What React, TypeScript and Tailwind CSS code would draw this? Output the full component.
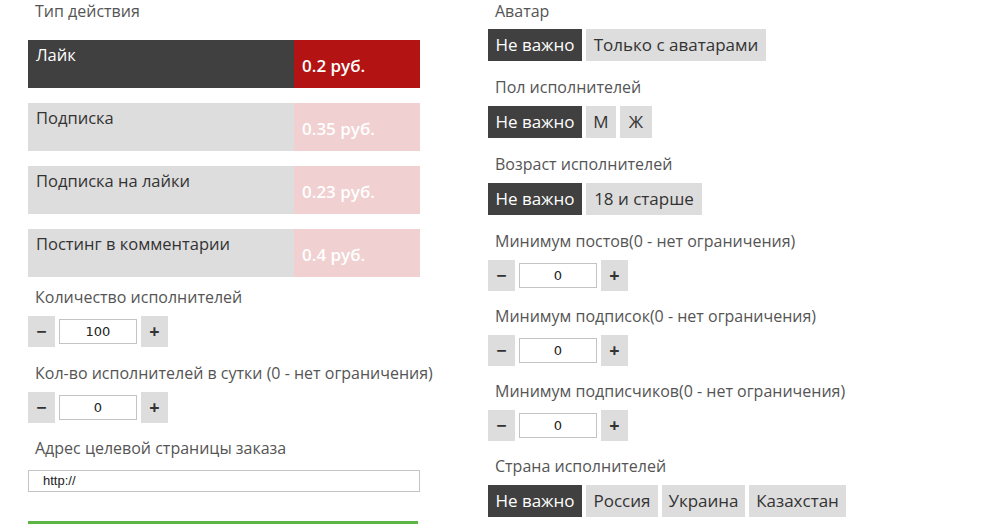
const font = { fontFamily: '"Open Sans", "Noto Sans", sans-serif' };

function Label({ text, className = '' }: { text: string; className?: string }) {
  return <div className={`h-[22px] pl-[7px] text-[16px] leading-[22px] whitespace-nowrap text-[#555] ${className}`}>{text}</div>;
}

function Stepper({ value, className = '' }: { value: string; className?: string }) {
  return (
    <div className={`flex items-center gap-[4px] ${className}`}>
      <div className="w-[27px] h-[31px] bg-[#dddddd] flex items-center justify-center text-[#333] text-[18px] font-bold">−</div>
      <div
        className="w-[78px] h-[25px] border border-[#c4c4c4] bg-white flex items-center justify-center text-[13px] text-[#222]"
        style={{ fontFamily: '"DejaVu Sans", sans-serif' }}
      >
        {value}
      </div>
      <div className="w-[27px] h-[31px] bg-[#dddddd] flex items-center justify-center text-[#333] text-[18px] font-bold">+</div>
    </div>
  );
}

function Choices({ items, className = '' }: { items: { t: string; w: string }[]; className?: string }) {
  return (
    <div className={`flex gap-[4px] ${className}`}>
      {items.map((it, i) => (
        <div
          key={i}
          className={`${it.w} h-[32px] flex items-center justify-center text-[17px] whitespace-nowrap ${
            i === 0 ? 'bg-[#404040] text-white' : 'bg-[#dddddd] text-[#333]'
          }`}
        >
          {it.t}
        </div>
      ))}
    </div>
  );
}

export default function App() {
  const actions = [
    { title: 'Лайк', price: '0.2 руб.', active: true },
    { title: 'Подписка', price: '0.35 руб.', active: false },
    { title: 'Подписка на лайки', price: '0.23 руб.', active: false },
    { title: 'Постинг в комментарии', price: '0.4 руб.', active: false },
  ];

  return (
    <div className="w-[985px] h-[524px] bg-white overflow-hidden flex pl-[28px] gap-[68px]" style={font}>
      <div className="w-[392px] flex flex-col shrink-0">
        <Label text="Тип действия" />
        <div className="mt-[18px] flex flex-col gap-[15px]">
          {actions.map((a, i) => (
            <div key={i} className="h-[48px] flex">
              <div
                className={`w-[266px] pl-[8px] pt-[4px] text-[16.5px] leading-[22px] ${
                  a.active ? 'bg-[#404040] text-white' : 'bg-[#dddddd] text-[#333]'
                }`}
              >
                {a.title}
              </div>
              <div
                className={`flex-1 pl-[8px] pt-[14px] text-[17px] leading-[24px] font-semibold text-white ${
                  a.active ? 'bg-[#b31312]' : 'bg-[#f0d0d0]'
                }`}
              >
                {a.price}
              </div>
            </div>
          ))}
        </div>
        <Label text="Количество исполнителей" className="mt-[9px]" />
        <Stepper value="100" className="mt-[8px]" />
        <Label text="Кол-во исполнителей в сутки (0 - нет ограничения)" className="mt-[15px]" />
        <Stepper value="0" className="mt-[8px]" />
        <Label text="Адрес целевой страницы заказа" className="mt-[14px]" />
        <div
          className="mt-[11px] h-[25px] border border-[#c4c4c4] bg-white flex items-center pl-[14px] text-[13px] text-[#222]"
          style={{ fontFamily: '"Liberation Sans", sans-serif' }}
        >
          http://
        </div>
        <div className="mt-[29px] h-[6px] w-[390px] bg-[#5cb646]" />
      </div>

      <div className="flex flex-col">
        <Label text="Аватар" />
        <Choices
          className="mt-[7px]"
          items={[
            { t: 'Не важно', w: 'w-[94px]' },
            { t: 'Только с аватарами', w: 'w-[180px]' },
          ]}
        />
        <Label text="Пол исполнителей" className="mt-[15px]" />
        <Choices
          className="mt-[8px]"
          items={[
            { t: 'Не важно', w: 'w-[94px]' },
            { t: 'М', w: 'w-[30px]' },
            { t: 'Ж', w: 'w-[32px]' },
          ]}
        />
        <Label text="Возраст исполнителей" className="mt-[15px]" />
        <Choices
          className="mt-[8px]"
          items={[
            { t: 'Не важно', w: 'w-[94px]' },
            { t: '18 и старше', w: 'w-[116px]' },
          ]}
        />
        <Label text="Минимум постов(0 - нет ограничения)" className="mt-[15px]" />
        <Stepper value="0" className="mt-[8px]" />
        <Label text="Минимум подписок(0 - нет ограничения)" className="mt-[14px]" />
        <Stepper value="0" className="mt-[8px]" />
        <Label text="Минимум подписчиков(0 - нет ограничения)" className="mt-[14px]" />
        <Stepper value="0" className="mt-[8px]" />
        <Label text="Страна исполнителей" className="mt-[14px]" />
        <Choices
          className="mt-[8px]"
          items={[
            { t: 'Не важно', w: 'w-[94px]' },
            { t: 'Россия', w: 'w-[72px]' },
            { t: 'Украина', w: 'w-[83px]' },
            { t: 'Казахстан', w: 'w-[97px]' },
          ]}
        />
      </div>
    </div>
  );
}
